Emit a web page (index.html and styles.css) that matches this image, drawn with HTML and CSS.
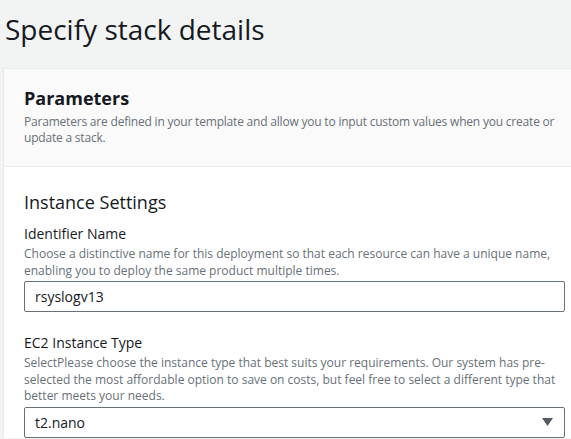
FILE: index.html
```html
<!DOCTYPE html>
<html lang="en">
<head>
  <meta charset="UTF-8">
  <meta name="viewport" content="width=device-width, initial-scale=1">
  <title>Specify stack details</title>
  <link rel="stylesheet" href="styles.css">
</head>
<body>

  <h1 class="page-title">Specify stack details</h1>

  <section class="card">
    <header class="card-header">
      <h2>Parameters</h2>
      <p>Parameters are defined in your template and allow you to input custom values when you create or update a stack.</p>
    </header>

    <div class="card-body">
      <h3>Instance Settings</h3>

      <div class="field">
        <label for="identifier">Identifier Name</label>
        <p class="hint">Choose a distinctive name for this deployment so that each resource can have a unique name, enabling you to deploy the same product multiple times.</p>
        <input id="identifier" type="text" value="rsyslogv13">
      </div>

      <div class="field">
        <label for="instance-type">EC2 Instance Type</label>
        <p class="hint">SelectPlease choose the instance type that best suits your requirements. Our system has pre-selected the most affordable option to save on costs, but feel free to select a different type that better meets your needs.</p>
        <div class="select" id="instance-type">
          <span>t2.nano</span>
          <svg width="11" height="8" viewBox="0 0 11 8"><path d="M0 0h11L5.5 8z" fill="#545b64"/></svg>
        </div>
      </div>
    </div>
  </section>

</body>
</html>
```

FILE: styles.css
```css
* { margin: 0; padding: 0; box-sizing: border-box; }
body {
  background: #f2f3f3; color: #16191f;
  font-family: 'Open Sans', 'Noto Sans', sans-serif;
  overflow: hidden;
}
.page-title {
  font-size: 28px; font-weight: 400; line-height: 34px;
  padding: 12px 0 0 5px; height: 68px;
}
.card {
  margin-left: 3px; width: 600px;
  background: #fff;
  border-top: 1px solid #eaeded; border-left: 1px solid #eaeded;
}
.card-header {
  background: #fafafa; border-bottom: 1px solid #eaeded;
  padding: 18px 20px 0; height: 98px;
}
.card-header h2 { font-size: 18px; font-weight: 700; line-height: 22px; }
.card-header p {
  font-size: 12px; color: #687078; line-height: 16px; margin-top: 5px;
  width: 545px; letter-spacing: -0.2px;
}
.card-body { padding: 24px 6px 0 20px; width: 568px; }
.card-body h3 { font-size: 18px; font-weight: 400; line-height: 22px; margin-bottom: 12px; }
.field { margin-bottom: 22px; }
.field label { display: block; font-size: 14px; line-height: 18px; }
.hint { font-size: 12px; color: #687078; line-height: 16.5px; margin-top: 3px; }
.field input, .select {
  display: flex; align-items: center; justify-content: space-between;
  width: 541px; height: 31px; margin-top: 2px;
  border: 1px solid #687078; border-radius: 2px;
  padding: 0 11px 0 10px;
  font: inherit; font-size: 14px; color: #16191f; background: #fff;
}
```
